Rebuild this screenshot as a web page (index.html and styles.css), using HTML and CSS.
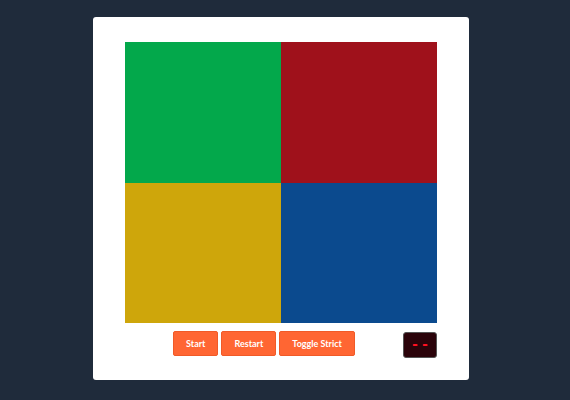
FILE: index.html
```html
<!DOCTYPE html>
<html>
<head>
<meta charset="utf-8">
<link rel="stylesheet" href="styles.css">
</head>
<body>
<div class="card">
  <div class="board">
    <div class="pad green"></div>
    <div class="pad red"></div>
    <div class="pad yellow"></div>
    <div class="pad blue"></div>
  </div>
  <div class="controls">
    <div class="buttons">
      <button class="btn">Start</button>
      <button class="btn">Restart</button>
      <button class="btn">Toggle Strict</button>
    </div>
    <div class="display">- -</div>
  </div>
</div>
</body>
</html>
```
FILE: styles.css
```css
html, body { margin: 0; padding: 0; }
body {
  background: #1f2b3b;
  width: 570px;
  height: 400px;
  padding-top: 17px;
  box-sizing: border-box;
  font-family: Lato, "Open Sans", sans-serif;
}
.card {
  margin-left: 93px;
  width: 376px;
  height: 363px;
  box-sizing: border-box;
  background: #fff;
  border-radius: 3px;
  padding: 25px 32px 0 32px;
}
.board {
  display: grid;
  grid-template-columns: 156px 156px;
  grid-template-rows: 141px 140px;
  width: 312px;
}
.green { background: #03a84b; }
.red { background: #9f111b; }
.yellow { background: #cea60b; }
.blue { background: #0b4a8e; }
.controls {
  display: flex;
  margin-top: 8px;
  align-items: flex-start;
}
.buttons {
  flex: 1;
  display: flex;
  justify-content: center;
  gap: 3px;
}
.btn {
  height: 25px;
  padding: 0 12px;
  background: #ff6633;
  border: 1px solid #f05a28;
  border-radius: 2px;
  color: #fff;
  font-family: Lato, sans-serif;
  font-weight: bold;
  font-size: 9px;
}
.display {
  width: 34px;
  height: 26px;
  box-sizing: border-box;
  margin-top: 1px;
  background: #2b030a;
  border: 1px solid #555;
  border-radius: 3px;
  color: #ff1020;
  font-weight: 900;
  font-size: 16px;
  line-height: 21px;
  text-align: center;
  letter-spacing: 0;
}
```
